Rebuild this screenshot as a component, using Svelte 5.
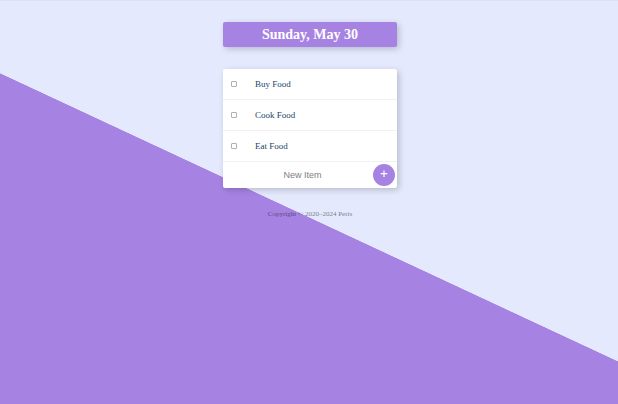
<script>
  let items = $state([
    { name: 'Buy Food', done: false },
    { name: 'Cook Food', done: false },
    { name: 'Eat Food', done: false }
  ]);
  let newItem = $state('');

  function add(event) {
    event.preventDefault();
    const name = newItem.trim();
    if (name) items.push({ name, done: false });
    newItem = '';
  }
</script>

<div class="page">
  <header class="box title">
    <h1>Sunday, May 30</h1>
  </header>

  <main class="box list">
    {#each items as item}
      <label class="item" class:done={item.done}>
        <input type="checkbox" bind:checked={item.done} />
        <span>{item.name}</span>
      </label>
    {/each}
    <form class="add" onsubmit={add}>
      <input type="text" bind:value={newItem} placeholder="New Item" aria-label="New Item" autocomplete="off" />
      <button type="submit" aria-label="Add item">
        <svg viewBox="0 0 10 10" width="10" height="10" aria-hidden="true">
          <path d="M5 .5v6.5M1.7 3.7h6.6" stroke="#fff" stroke-width="1.2" />
        </svg>
      </button>
    </form>
  </main>

  <footer>Copyright © 2020–2024 Peris</footer>
</div>

<style>
  :global(body) {
    margin: 0;
  }

  .page {
    box-sizing: border-box;
    min-height: 100vh;
    padding: 21px 16px 21px 18px;
    display: flex;
    flex-direction: column;
    align-items: center;
    gap: 22px;
    border-top: 1px solid #dde2f0;
    background: linear-gradient(25deg, #a683e3 47.8%, #e4e9fd 47.9%);
    font-family: 'Liberation Serif', 'Times New Roman', serif;
  }

  .box {
    width: 100%;
    max-width: 174px;
    border-radius: 2px;
    background: #fff;
    box-shadow: 2px 2px 6px rgba(0, 0, 0, 0.2);
    overflow: hidden;
  }

  .title {
    background: #a683e3;
    text-align: center;
  }

  h1 {
    margin: 0;
    font-size: 14px;
    line-height: 25px;
    font-weight: bold;
    color: #fff;
  }

  .item {
    box-sizing: border-box;
    height: 31px;
    padding: 0 8px;
    display: flex;
    align-items: center;
    gap: 18px;
    border-bottom: 1px solid #f1f1f1;
    font-size: 9px;
    line-height: 12px;
    color: #204566;
  }

  .item input {
    appearance: none;
    box-sizing: border-box;
    width: 6px;
    height: 6px;
    margin: 0;
    border: 1px solid #b0b0b0;
    border-radius: 1px;
    background: #fff;
  }

  .item input:checked {
    background: #a683e3;
  }

  .done span {
    text-decoration: line-through;
  }

  .add {
    height: 26px;
    padding: 0 2px 0 9px;
    display: flex;
    align-items: center;
  }

  .add input {
    flex: 1;
    min-width: 0;
    padding: 0;
    border: 0;
    outline: 0;
    background: transparent;
    font-family: 'Liberation Sans', Arial, sans-serif;
    font-size: 9px;
    line-height: 12px;
    text-align: center;
    color: #204566;
  }

  .add input::placeholder {
    color: #808080;
    opacity: 1;
  }

  .add button {
    width: 22px;
    height: 22px;
    padding: 0;
    display: flex;
    align-items: center;
    justify-content: center;
    border: 0;
    border-radius: 50%;
    background: #a683e3;
    cursor: pointer;
  }

  footer {
    font-size: 7px;
    line-height: 8px;
    color: rgba(0, 0, 0, 0.5);
  }
</style>
